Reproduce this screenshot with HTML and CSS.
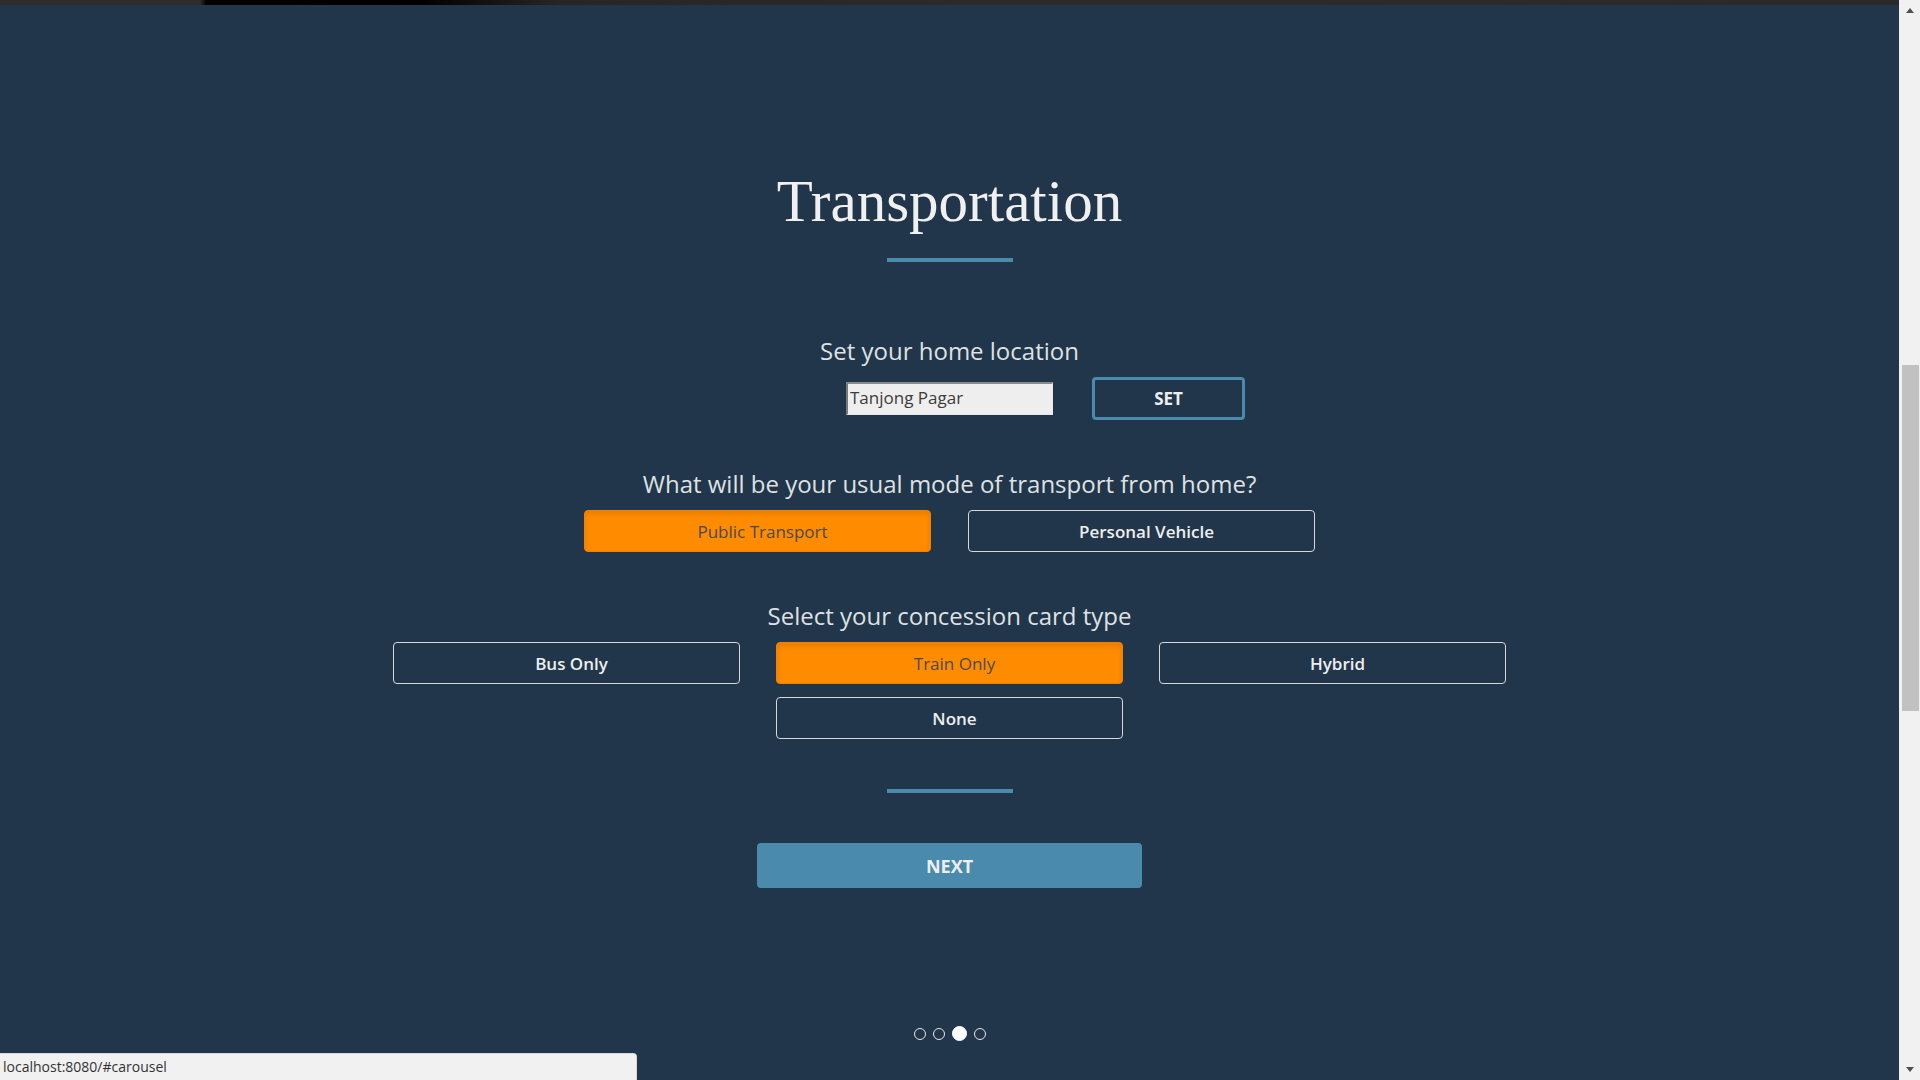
FILE: index.html
```html
<!DOCTYPE html>
<html lang="en">
<head>
<meta charset="utf-8">
<title>Transportation</title>
<link rel="stylesheet" href="styles.css">
</head>
<body>
<div class="window">
  <main class="page">
    <div class="top-strip"></div>
    <h1 class="title">Transportation</h1>
    <div class="divider"></div>

    <h2 class="question q-home">Set your home location</h2>
    <div class="location-row">
      <div></div>
      <input class="location-input" type="text" value="Tanjong Pagar">
      <div class="set-cell"><button class="btn-set">SET</button></div>
    </div>

    <h2 class="question q-mode">What will be your usual mode of transport from home?</h2>
    <div class="mode-row">
      <button class="choice active">Public Transport</button>
      <button class="choice">Personal Vehicle</button>
    </div>

    <h2 class="question q-card">Select your concession card type</h2>
    <div class="card-grid">
      <button class="choice">Bus Only</button>
      <button class="choice active">Train Only</button>
      <button class="choice">Hybrid</button>
      <button class="choice none">None</button>
    </div>

    <div class="divider divider-bottom"></div>

    <button class="btn-next">NEXT</button>

    <div class="dots">
      <span class="dot"></span>
      <span class="dot"></span>
      <span class="dot current"></span>
      <span class="dot"></span>
    </div>

    <div class="status-bar">localhost:8080/#carousel</div>
  </main>
  <aside class="scrollbar">
    <span class="arrow arrow-up"></span>
    <div class="track"><div class="thumb"></div></div>
    <span class="arrow arrow-down"></span>
  </aside>
</div>
</body>
</html>
```
FILE: styles.css
```css
* { box-sizing: border-box; }

html, body {
  margin: 0;
  padding: 0;
  width: 1920px;
  height: 1080px;
  overflow: hidden;
}

body {
  font-family: "Open Sans", "Liberation Sans", sans-serif;
  background: #21364a;
}

.window {
  display: flex;
  width: 1920px;
  height: 1080px;
}

.page {
  position: relative;
  width: 1899px;
  height: 1080px;
  background: #21364a;
  display: flex;
  flex-direction: column;
  align-items: center;
}

.top-strip {
  align-self: stretch;
  height: 5px;
  background: linear-gradient(to right, #2d2d2d 0, #2d2d2d 200px, #030303 206px, #000 420px, #262626 560px, #2b2b2b 1000px, #2a2a2a 100%);
}

.title {
  margin: 163px 0 0;
  font-family: "Liberation Serif", "DejaVu Serif", serif;
  font-weight: 400;
  font-size: 59px;
  line-height: 66px;
  color: #f0f0f0;
  letter-spacing: 0;
}

.divider {
  width: 126px;
  height: 4px;
  margin-top: 24px;
  background: #4a8aad;
}

.question {
  margin: 0;
  font-weight: 400;
  font-size: 24px;
  line-height: 34px;
  color: #dfe1e3;
}

.q-home { margin-top: 72px; }
.q-mode { margin-top: 47px; }
.q-card { margin-top: 47px; }

.location-row {
  margin-top: 9px;
  align-self: stretch;
  display: grid;
  grid-template-columns: 1fr 207px 1fr;
  align-items: center;
  height: 43px;
}

.location-input {
  width: 207px;
  height: 33px;
  padding: 0 0 3px 2px;
  font-family: "Open Sans", "Liberation Sans", sans-serif;
  font-size: 17px;
  color: #3c3c3c;
  background: #eeeeee;
  border-style: solid;
  border-width: 2px 1px 1px 2px;
  border-color: #8a8a8a #e6e6e6 #e6e6e6 #7a7a7a;
  outline: none;
}

.set-cell {
  padding-left: 39px;
}

.btn-set {
  display: block;
  width: 153px;
  height: 43px;
  background: transparent;
  border: 3px solid #4a8aad;
  border-radius: 4px;
  color: #eeeeee;
  font-family: "Open Sans", "Liberation Sans", sans-serif;
  font-weight: 700;
  font-size: 17px;
  padding: 0;
}

.mode-row {
  margin-top: 9px;
  display: flex;
  gap: 37px;
}

.choice {
  width: 347px;
  height: 42px;
  padding: 0 0 0 10px;
  background: transparent;
  border: 1px solid #d6d8da;
  border-radius: 4px;
  color: #eeeeee;
  font-family: "Open Sans", "Liberation Sans", sans-serif;
  font-size: 17px;
  font-weight: 600;
}

.choice.active {
  background: #ff8b00;
  border-color: #f08200;
  color: #4a4a4a;
  font-weight: 400;
  box-shadow: inset 0 3px 5px rgba(0, 0, 0, 0.1);
}

.card-grid {
  margin-top: 9px;
  display: grid;
  grid-template-columns: repeat(3, 347px);
  column-gap: 36px;
  row-gap: 13px;
}

.card-grid .none {
  grid-column: 2;
}

.divider-bottom {
  margin-top: 50px;
}

.btn-next {
  margin-top: 50px;
  width: 385px;
  height: 45px;
  padding: 0;
  border: none;
  border-radius: 4px;
  background: #4a8aad;
  color: #eeeeee;
  font-family: "Open Sans", "Liberation Sans", sans-serif;
  font-weight: 700;
  font-size: 18px;
}

.dots {
  margin-top: 138px;
  display: flex;
  align-items: center;
  gap: 7px;
  height: 15px;
}

.dot {
  width: 12px;
  height: 12px;
  border: 1px solid #e8e8e8;
  border-radius: 50%;
}

.dot.current {
  width: 15px;
  height: 15px;
  background: #ffffff;
  border-color: #ffffff;
}

.status-bar {
  position: absolute;
  left: 0;
  bottom: 0;
  width: 637px;
  height: 27px;
  padding: 3px 0 0 3px;
  background: #f1f1f1;
  border-top: 1px solid #d8d8d8;
  border-right: 1px solid #d8d8d8;
  border-top-right-radius: 4px;
  color: #333333;
  font-size: 14px;
  line-height: 20px;
}

.scrollbar {
  width: 21px;
  height: 1080px;
  background: #f1f1f1;
  display: flex;
  flex-direction: column;
  align-items: center;
}

.arrow {
  width: 0;
  height: 0;
  border-left: 4px solid transparent;
  border-right: 4px solid transparent;
}

.arrow-up {
  margin-top: 8px;
  border-bottom: 5px solid #505050;
}

.arrow-down {
  margin-bottom: 8px;
  border-top: 5px solid #505050;
}

.track {
  flex: 1;
  align-self: stretch;
  padding-top: 352px;
  display: flex;
  justify-content: center;
}

.thumb {
  width: 17px;
  height: 346px;
  margin-left: 2px;
  background: #c1c1c1;
}
```
